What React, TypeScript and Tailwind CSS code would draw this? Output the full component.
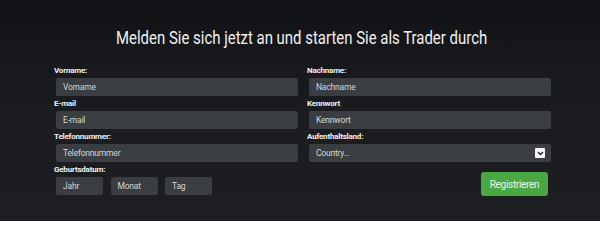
import React from "react";

const font = { fontFamily: "Roboto, 'Noto Sans', sans-serif" };

function Label({ children }: { children: React.ReactNode }) {
  return (
    <div className="h-[15px] leading-[15px] text-[8px] font-bold text-[#f2f2f2] tracking-[-0.2px]">
      {children}
    </div>
  );
}

function Field({ placeholder }: { placeholder: string }) {
  return (
    <div className="ml-[2px] w-[242px] h-[18px] rounded-[2px] bg-[#3a3d42] flex items-center pl-[7px] text-[8.5px] text-[#d6d6d6] tracking-[-0.2px]">
      {placeholder}
    </div>
  );
}

export default function App() {
  return (
    <div
      className="w-[600px] h-[221px] overflow-hidden bg-gradient-to-b from-[#111317] via-[#1a1c20] to-[#1c1e22]"
      style={font}
    >
      <div className="pt-[27px] h-[63px] flex justify-center">
        <div className="ml-[4px] inline-block scale-x-[0.83] origin-center whitespace-nowrap text-[18px] leading-[22px] text-[#f0f0f0]">
          Melden Sie sich jetzt an und starten Sie als Trader durch
        </div>
      </div>
      <div className="ml-[54px] w-[498px] grid grid-cols-[245px_245px] gap-x-[8px]">
        <div>
          <Label>Vorname:</Label>
          <Field placeholder="Vorname" />
        </div>
        <div>
          <Label>Nachname:</Label>
          <Field placeholder="Nachname" />
        </div>
        <div>
          <Label>E-mail</Label>
          <Field placeholder="E-mail" />
        </div>
        <div>
          <Label>Kennwort</Label>
          <Field placeholder="Kennwort" />
        </div>
        <div>
          <Label>Telefonnummer:</Label>
          <Field placeholder="Telefonnummer" />
        </div>
        <div>
          <Label>Aufenthaltsland:</Label>
          <div className="ml-[2px] w-[242px] h-[18px] rounded-[2px] bg-[#3a3d42] flex items-center justify-between pl-[7px] pr-[6px] text-[8.5px] text-[#d6d6d6] tracking-[-0.2px]">
            <span>Country...</span>
            <span className="w-[10px] h-[10px] bg-[#f4f4f4] rounded-[1px] flex items-center justify-center">
              <svg width="7" height="5" viewBox="0 0 7 5">
                <path d="M1 1 L3.5 3.5 L6 1" fill="none" stroke="#222" strokeWidth="1.4" />
              </svg>
            </span>
          </div>
        </div>
        <div>
          <Label>Geburtsdatum:</Label>
          <div className="ml-[2px] flex gap-[7.5px]">
            {["Jahr", "Monat", "Tag"].map((t) => (
              <div
                key={t}
                className="w-[47px] h-[18px] rounded-[2px] bg-[#3a3d42] flex items-center pl-[7px] text-[8.5px] text-[#d6d6d6] tracking-[-0.2px]"
              >
                {t}
              </div>
            ))}
          </div>
        </div>
        <div className="flex justify-end items-start pt-[10px] pr-[4px]">
          <button className="w-[67px] h-[24px] rounded-[3px] bg-[#4aa844] text-[#eaf5e8] text-[10px] tracking-[-0.3px] flex items-center justify-center">
            Registrieren
          </button>
        </div>
      </div>
    </div>
  );
}
